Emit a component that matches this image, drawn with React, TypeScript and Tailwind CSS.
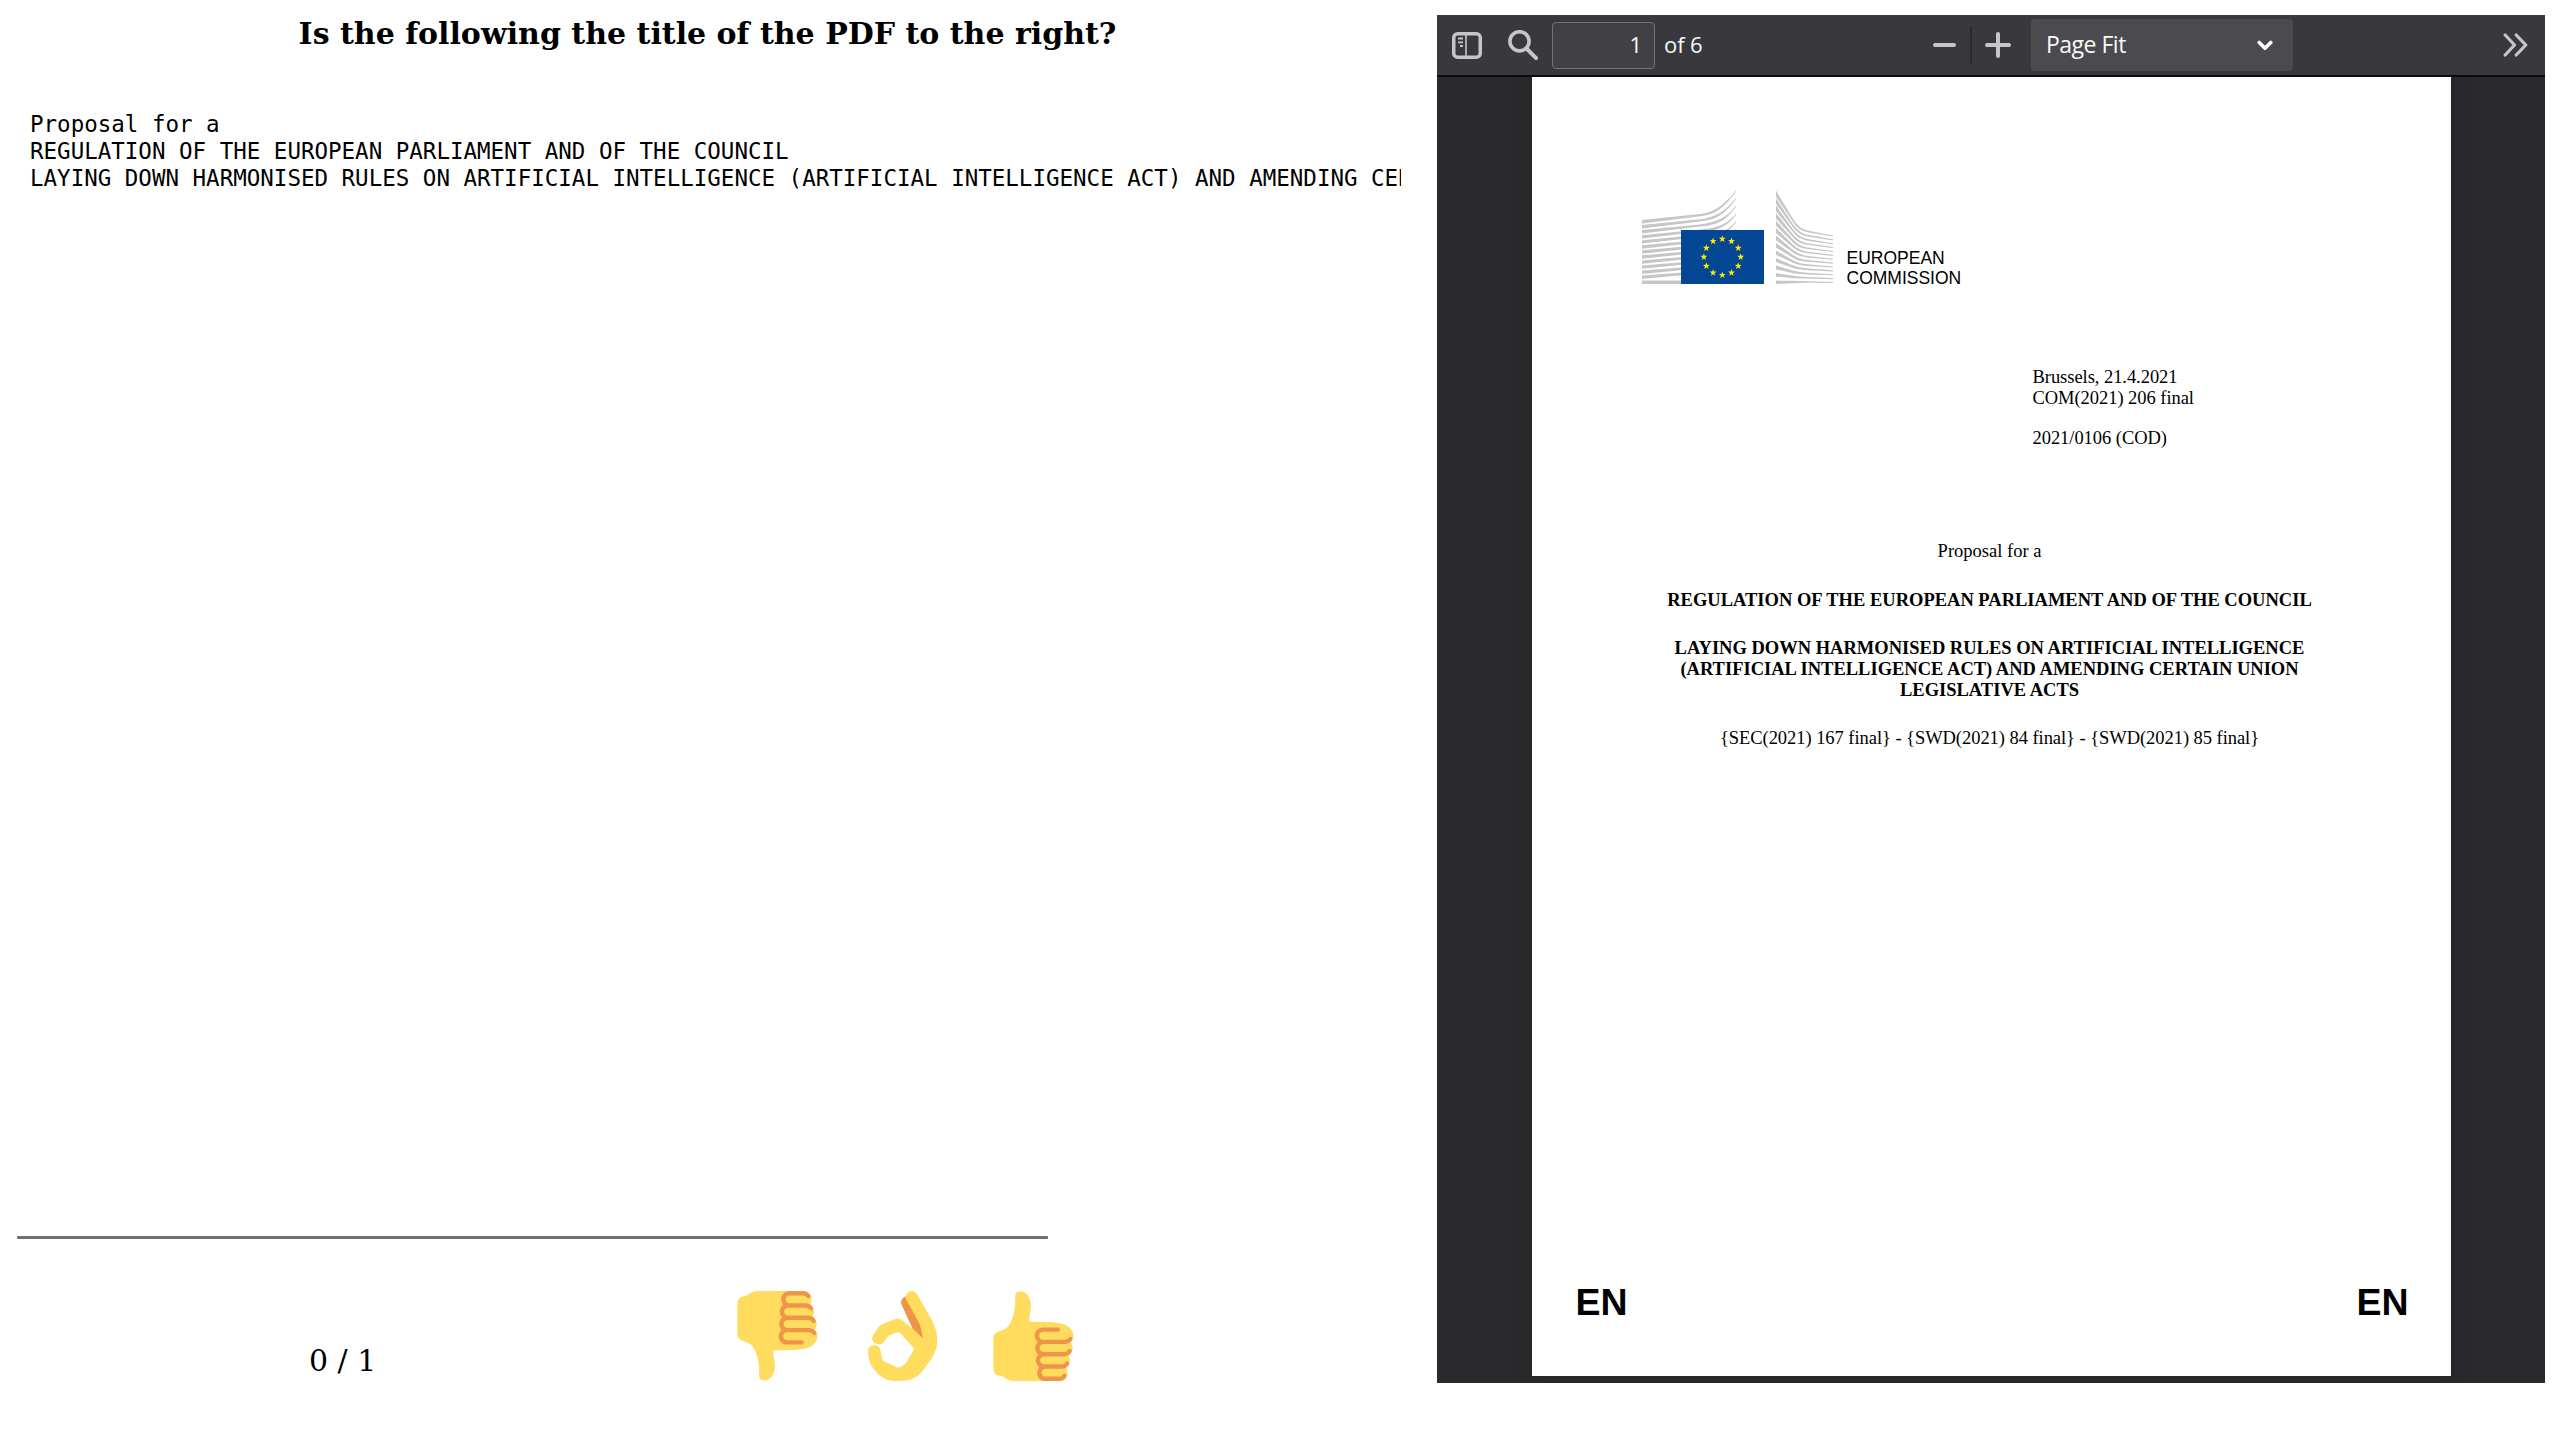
const THUMB_SKIN =
  "M34.956 17.916c0-.503-.12-.975-.321-1.404-1.341-4.326-7.619-4.01-16.549-4.221-1.493-.035-.639-1.798-.115-5.668.341-2.517-1.282-6.382-4.01-6.382-4.498 0-.171 3.548-4.148 12.322-2.125 4.688-6.875 2.062-6.875 6.771v10.719c0 1.833.18 3.595 2.758 3.885C8.195 34.219 7.633 36 11.238 36h18.044c1.838 0 3.333-1.496 3.333-3.334 0-.762-.267-1.456-.698-2.018 1.02-.571 1.72-1.649 1.72-2.899 0-.76-.266-1.454-.696-2.015 1.023-.57 1.725-1.649 1.725-2.901 0-.909-.368-1.733-.961-2.336.757-.611 1.251-1.535 1.251-2.581z";
const THUMB_FINGERS =
  "M23.02 21.249h8.604c1.17 0 2.268-.626 2.866-1.633.246-.415.109-.952-.307-1.199-.415-.247-.952-.108-1.199.307-.283.479-.806.775-1.361.775h-8.81c-.873 0-1.583-.71-1.583-1.583s.71-1.583 1.583-1.583H28.7c.483 0 .875-.392.875-.875s-.392-.875-.875-.875h-5.888c-1.838 0-3.333 1.495-3.333 3.333 0 1.025.475 1.932 1.205 2.544-.615.605-.998 1.445-.998 2.373 0 1.028.478 1.938 1.212 2.549-.611.604-.99 1.441-.99 2.367 0 1.12.559 2.108 1.409 2.713-.524.589-.852 1.356-.852 2.204 0 1.838 1.495 3.333 3.333 3.333h5.484c1.17 0 2.269-.625 2.867-1.632.247-.415.11-.952-.305-1.199-.416-.245-.953-.11-1.199.305-.285.479-.808.776-1.363.776h-5.484c-.873 0-1.583-.71-1.583-1.583s.71-1.583 1.583-1.583h6.506c1.17 0 2.27-.626 2.867-1.633.247-.416.11-.953-.305-1.199-.419-.251-.954-.11-1.199.305-.289.487-.799.777-1.363.777h-7.063c-.873 0-1.583-.711-1.583-1.584s.71-1.583 1.583-1.583h8.091c1.17 0 2.269-.625 2.867-1.632.247-.415.11-.952-.305-1.199-.417-.246-.953-.11-1.199.305-.289.486-.799.776-1.363.776H23.02c-.873 0-1.583-.71-1.583-1.583s.71-1.584 1.583-1.584z";

function Thumb({ down = false }: { down?: boolean }) {
  return (
    <svg viewBox="0 0 36 36" className={down ? "size-[90px] shrink-0 -scale-y-100" : "size-[90px] shrink-0"}>
      <path fill="#FFDB5E" d={THUMB_SKIN} />
      <path fill="#EE9547" d={THUMB_FINGERS} />
    </svg>
  );
}

function OkHand() {
  return (
    <svg viewBox="414 62 270 270" className="size-[90px] shrink-0">
      <path
        fill="#FFDB5E"
        d="M556 82C558 70 565 63 575 63C583 63 589 67 593 74L633 145C644 165 652 186 652 210C652 230 646 247 636 263L607 303C590 324 568 332 534 332C509 332 491 327 474 311C455 293 444 270 444 243C444 232 452 225 463 225C474 225 481 232 482 243C483 255 486 265 491 273L534 292C546 288 555 283 560 275L583 235L545 193C541 188 537 185 532 186L505 197C500 201 496 209 492 215C486 222 478 224 470 221C458 217 453 206 459 195L476 170C479 166 483 163 487 161L525 147C534 144 541 146 549 151L578 175Z"
      />
      <path fill="#EE9547" d="M556 78C550 82 543 88 543 96C543 101 545 104 547 108L577 174L608 204C607 188 603 172 597 158L560 90C557 85 556 82 556 78Z" />
    </svg>
  );
}

const STAR = "M0-3.700.85-1.200 3.500-1.150 1.380.45 2.170 3 0 1.480-2.170 3-1.380.45-3.500-1.150-.85-1.200Z";
const ROWS = Array.from({ length: 13 }, (_, i) => i);

function leftStripe(i: number) {
  if (i === 12) return "M0 90.600H60V94H0Z";
  const y = 30 + i * 5.05;
  const mid = 24 + i * 5.2;
  const end = 0.2 + i * 7.75;
  return `M0 ${y}L58 ${mid}C75 ${mid - 2} 84 ${end + 12} 94 ${end}v1.300C84 ${end + 14.5} 76 ${mid + 0.8} 58 ${mid + 2.2}L0 ${y + 3.4}Z`;
}

function rightStripe(i: number) {
  const y = 0.6 + i * 7.5;
  const knee = 39 + i * 4.33;
  const end = 45.4 + i * 3.88;
  const ax = 134 + 23 * 0.72;
  const ay = y + (knee - y) * 0.72;
  const bx = 157 + 34 * 0.25;
  const by = knee + (end - knee) * 0.25;
  const t = 6 - i * 0.22;
  return `M134 ${y}L${ax} ${ay}Q157 ${knee} ${bx} ${by}L191 ${end}v1.100L${bx} ${by + 1.6}Q156 ${knee + 1.8} ${ax} ${ay + 3 - i * 0.05}L134 ${y + t}Z`;
}

function CommissionLogo() {
  return (
    <svg viewBox="0 0 192 94" className="h-[94px] w-[192px] shrink-0">
      {ROWS.map((i) => (
        <path key={i} fill="#c6c6c6" d={leftStripe(i)} />
      ))}
      {ROWS.map((i) => (
        <path key={i} fill="#c6c6c6" d={rightStripe(i)} />
      ))}
      <rect x="39" y="40" width="83" height="54" fill="#034694" />
      {Array.from({ length: 12 }, (_, i) => {
        const a = (i * Math.PI) / 6;
        return (
          <path
            key={i}
            fill="#ffed00"
            d={STAR}
            transform={`translate(${80.3 + 18.4 * Math.sin(a)} ${67 - 18.1 * Math.cos(a)})`}
          />
        );
      })}
    </svg>
  );
}

function Toolbar() {
  return (
    <div className="flex h-[62px] items-center border-b-2 border-[#0c0c0d] bg-[#38383d] font-['Open_Sans',sans-serif] text-[22px] leading-[30px] text-[#f9f9fa]">
      <svg viewBox="0 0 30 27" className="ml-[15px] h-[27px] w-[30px] shrink-0 text-[#c6c6c7]">
        <rect x="1.75" y="1.75" width="26.5" height="23.5" rx="3.8" fill="none" stroke="currentColor" strokeWidth="3.5" />
        <path d="M14 3v21" stroke="currentColor" strokeWidth="1.6" />
        <path d="M6 6.5h5M6 10.3h5M8 14h3" stroke="currentColor" strokeWidth="1.8" />
      </svg>
      <svg viewBox="0 0 30 30" className="ml-[26px] h-[30px] w-[30px] shrink-0" fill="none" stroke="#c6c6c7">
        <circle cx="11.5" cy="11.3" r="9.6" strokeWidth="3.6" />
        <path d="M18.5 18.5l9.6 9.6" strokeWidth="4" strokeLinecap="round" />
      </svg>
      <div className="ml-3.5 flex h-[47px] w-[103px] shrink-0 items-center justify-end rounded-[4px] border border-[#737376] bg-[#414145] pr-3 pb-0.5">
        1
      </div>
      <span className="ml-[9px] w-[60px] shrink-0 pb-0.5 tracking-[-0.1px] whitespace-nowrap">of 6</span>
      <svg viewBox="0 0 23 4" className="ml-[209px] h-1 w-[23px] shrink-0">
        <rect width="23" height="4" rx="2" fill="#c6c6c7" />
      </svg>
      <div className="ml-3.5 h-[38px] w-0.5 shrink-0 bg-[#29292d]" />
      <svg viewBox="0 0 26 26" className="ml-[13px] size-[26px] shrink-0">
        <path d="M2 13h22M13 2v22" stroke="#c6c6c7" strokeWidth="4" strokeLinecap="round" />
      </svg>
      <div className="ml-5 flex h-[52px] w-[262px] shrink-0 items-center justify-between rounded-[4px] bg-[#4a4a4f] pr-5 pl-[15px]">
        <span className="pb-0.5 text-[23px] tracking-[-0.5px]">Page Fit</span>
        <svg viewBox="0 0 16 11" className="h-[11px] w-4" fill="none" stroke="#fff" strokeWidth="3.6" strokeLinecap="round" strokeLinejoin="round">
          <path d="M2.2 2.5L8 8.3l5.800-5.800" />
        </svg>
      </div>
      <svg viewBox="0 0 25 24" className="mr-[17px] ml-auto h-6 w-[25px] shrink-0" fill="none" stroke="#c6c6c7" strokeWidth="3.2" strokeLinecap="round" strokeLinejoin="round">
        <path d="M2.200 2L11.500 12L2.200 22M13.200 2L22.800 12L13.200 22" />
      </svg>
    </div>
  );
}

function PdfPage() {
  return (
    <div className="mx-auto flex h-[1299px] w-[919px] flex-col bg-white font-['Liberation_Serif',serif] text-[18.5px] leading-[21px] text-black shadow-[0_0_12px_4px_rgba(38,38,38,0.9)]">
      <div className="mt-[113px] ml-[110px] flex h-[94px]">
        <CommissionLogo />
        <div className="mt-[58px] ml-[13px] font-['Liberation_Sans',sans-serif] text-[17.5px] leading-5">
          EUROPEAN
          <br />
          COMMISSION
        </div>
      </div>
      <div className="mt-[83px] ml-[501px] tracking-[-0.05px]">
        <p>Brussels, 21.4.2021</p>
        <p>COM(2021) 206 final</p>
        <p className="mt-[19px]">2021/0106 (COD)</p>
      </div>
      <div className="mt-[92px] pr-[3px] text-center">
        <p>Proposal for a</p>
        <p className="mt-7 font-bold">REGULATION OF THE EUROPEAN PARLIAMENT AND OF THE COUNCIL</p>
        <p className="mt-[27px] font-bold">
          LAYING DOWN HARMONISED RULES ON ARTIFICIAL INTELLIGENCE
          <br />
          (ARTIFICIAL INTELLIGENCE ACT) AND AMENDING CERTAIN UNION
          <br />
          LEGISLATIVE ACTS
        </p>
        <p className="mt-[27px] tracking-[-0.05px]">{"{SEC(2021) 167 final} - {SWD(2021) 84 final} - {SWD(2021) 85 final}"}</p>
      </div>
      <div className="mt-auto mb-[52px] flex justify-between pr-[42px] pl-11 font-['Liberation_Sans',sans-serif] text-[37.5px] leading-[44px] font-bold">
        <span>EN</span>
        <span>EN</span>
      </div>
    </div>
  );
}

export default function App() {
  return (
    <div className="flex h-[1440px] w-[2560px] overflow-hidden bg-white text-black">
      <main className="flex w-[1437px] shrink-0 flex-col font-['DejaVu_Serif',serif]">
        <h1 className="mt-[15px] pr-[22px] text-center text-[30px] leading-[38px] font-bold whitespace-nowrap">
          Is the following the title of the PDF to the right?
        </h1>
        <pre className="mt-[58px] ml-[30px] w-[1371px] overflow-hidden font-['DejaVu_Sans_Mono',monospace] text-[22.5px] leading-[27px]">
          {"Proposal for a\nREGULATION OF THE EUROPEAN PARLIAMENT AND OF THE COUNCIL\nLAYING DOWN HARMONISED RULES ON ARTIFICIAL INTELLIGENCE (ARTIFICIAL INTELLIGENCE ACT) AND AMENDING CERTAIN UNION LEGISLATIVE ACTS"}
        </pre>
        <footer className="mt-auto mb-[59px] ml-[17px]">
          <div className="h-[3px] w-[1031px] rounded-[1px] bg-[#6f6f6f]" />
          <div className="mt-[52px] flex h-[90px] items-end">
            <span className="mb-0.5 w-[713px] shrink-0 pl-[292px] text-[30px] leading-[36px] whitespace-nowrap">0 / 1</span>
            <div className="flex gap-[38px]">
              <Thumb down />
              <OkHand />
              <Thumb />
            </div>
          </div>
        </footer>
      </main>
      <aside className="mt-[15px] h-[1368px] w-[1108px] overflow-hidden bg-[#2a2a2e]">
        <div className="relative z-10">
          <Toolbar />
        </div>
        <PdfPage />
      </aside>
    </div>
  );
}
